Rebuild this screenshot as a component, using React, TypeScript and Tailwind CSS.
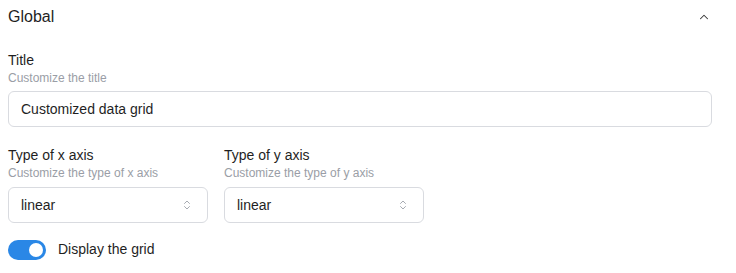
import { ChevronUp, ChevronsUpDown } from "lucide-react";

const font = { fontFamily: '"Liberation Sans", Arial, sans-serif' };

function Field({
  label,
  hint,
  gap,
  children,
}: {
  label: string;
  hint: string;
  gap: string;
  children: React.ReactNode;
}) {
  return (
    <div className="flex flex-col">
      <span className="text-[14px] leading-5 text-[#1f1f1f]">{label}</span>
      <span className="text-[12px] leading-4 text-[#9a9ea6]">{hint}</span>
      <div className={gap}>{children}</div>
    </div>
  );
}

function Select({ value }: { value: string }) {
  return (
    <div className="flex h-9 w-[200px] items-center justify-between rounded-md border border-[#d9dbe0] bg-white pl-3 pr-[14px] text-[14px] text-[#1f1f1f]">
      <span>{value}</span>
      <ChevronsUpDown size={12} strokeWidth={1.5} className="text-[#8a8f98]" />
    </div>
  );
}

export default function App() {
  return (
    <div className="h-[273px] w-[736px] bg-white pl-2 pr-6" style={font}>
      <div className="flex h-[34px] items-center justify-between">
        <span className="text-[16px] text-[#1f1f1f]">Global</span>
        <ChevronUp size={14} strokeWidth={1.75} className="mr-[1px] text-[#333]" />
      </div>

      <div className="mt-4">
        <Field label="Title" hint="Customize the title" gap="mt-[5px]">
          <div className="flex h-9 w-full items-center rounded-md border border-[#d9dbe0] bg-white px-3 text-[14px] text-[#1f1f1f]">
            Customized data grid
          </div>
        </Field>
      </div>

      <div className="mt-[18px] flex gap-4">
        <Field label="Type of x axis" hint="Customize the type of x axis" gap="mt-[6px]">
          <Select value="linear" />
        </Field>
        <Field label="Type of y axis" hint="Customize the type of y axis" gap="mt-[6px]">
          <Select value="linear" />
        </Field>
      </div>

      <div className="mt-4 flex items-center gap-3">
        <div className="flex h-5 w-[38px] items-center justify-end rounded-full bg-[#2a87e6] pr-[3px]">
          <div className="h-[14px] w-[14px] rounded-full bg-white" />
        </div>
        <span className="text-[14px] text-[#1f1f1f]">Display the grid</span>
      </div>
    </div>
  );
}
